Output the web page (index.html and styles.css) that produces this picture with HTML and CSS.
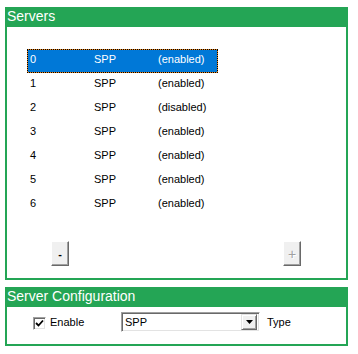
FILE: index.html
```html
<!DOCTYPE html>
<html>
<head>
<meta charset="utf-8">
<link rel="stylesheet" href="styles.css">
</head>
<body>
<section class="group">
  <div class="title">Servers</div>
  <div class="panel servers-panel">
    <ul class="list">
      <li class="row selected"><span>0</span><span>SPP</span><span>(enabled)</span></li>
      <li class="row"><span>1</span><span>SPP</span><span>(enabled)</span></li>
      <li class="row"><span>2</span><span>SPP</span><span>(disabled)</span></li>
      <li class="row"><span>3</span><span>SPP</span><span>(enabled)</span></li>
      <li class="row"><span>4</span><span>SPP</span><span>(enabled)</span></li>
      <li class="row"><span>5</span><span>SPP</span><span>(enabled)</span></li>
      <li class="row"><span>6</span><span>SPP</span><span>(enabled)</span></li>
    </ul>
    <div class="buttons">
      <button class="btn">-</button>
      <button class="btn" disabled>+</button>
    </div>
  </div>
</section>
<section class="group config">
  <div class="title">Server Configuration</div>
  <div class="panel config-panel">
    <label class="check">
      <span class="box"><svg width="9" height="9" viewBox="0 0 9 9"><polyline points="1,4 3.5,6.5 8,1.5" fill="none" stroke="#000" stroke-width="1.8"/></svg></span>
      <span>Enable</span>
    </label>
    <div class="combo">
      <span class="value">SPP</span>
      <span class="drop"><svg width="7" height="4" viewBox="0 0 7 4"><polygon points="0,0 7,0 3.5,4" fill="#000"/></svg></span>
    </div>
    <span class="type-label">Type</span>
  </div>
</section>
</body>
</html>
```
FILE: styles.css
```css
html, body {
  background: #fff;
}
body {
  margin: 0;
  padding: 7px 0 0 5px;
  font-family: "Liberation Sans", Arial, sans-serif;
  font-size: 11px;
  color: #000;
}
.group {
  width: 343px;
}
.config {
  margin-top: 7px;
}
.title {
  background: #24a555;
  color: #fff;
  font-size: 14px;
  height: 20px;
  line-height: 18px;
  padding-left: 2px;
  box-sizing: border-box;
}
.panel {
  border: 2px solid #24a555;
  border-top: 0;
}
.servers-panel {
  padding: 22px 0 12px 20px;
}
.list {
  list-style: none;
  margin: 0;
  padding: 0;
  width: 191px;
}
.row {
  box-sizing: border-box;
  height: 24px;
  border: 1px solid transparent;
  padding: 3px 0 0 2px;
  line-height: 13px;
  display: grid;
  grid-template-columns: 64px 64px auto;
}
.row.selected {
  border: 1px dotted #000;
  background: linear-gradient(#0078d7, #0078d7) padding-box, linear-gradient(#e8861e, #e8861e) border-box;
  color: #fff;
}
.buttons {
  display: flex;
  justify-content: space-between;
  margin-top: 24px;
  padding: 0 45px 0 24px;
}
.btn {
  box-sizing: border-box;
  width: 18px;
  height: 25px;
  padding: 0;
  margin: 0;
  background: #f0f0f0;
  border: 1px solid;
  border-color: #fff #696969 #696969 #fff;
  box-shadow: inset -1px -1px 0 #a0a0a0;
  font-family: "Liberation Sans", Arial, sans-serif;
  font-size: 11px;
  font-weight: bold;
  color: #000;
  line-height: 20px;
}
.btn:disabled {
  color: #a0a0a0;
  font-weight: normal;
  font-size: 14px;
  text-shadow: 1px 1px 0 #fff;
}
.config-panel {
  display: flex;
  align-items: center;
  padding: 5px 0 12px 26px;
}
.check {
  display: flex;
  align-items: center;
  width: 88px;
  height: 20px;
}
.box {
  box-sizing: border-box;
  width: 13px;
  height: 13px;
  margin-right: 4px;
  margin-top: 2px;
  background: #fff;
  border: 1px solid;
  border-color: #a0a0a0 #fff #fff #a0a0a0;
  box-shadow: inset 1px 1px 0 #696969, inset -1px -1px 0 #e3e3e3;
  display: flex;
  align-items: center;
  justify-content: center;
}
.combo {
  box-sizing: border-box;
  width: 139px;
  height: 20px;
  border: 1px solid;
  border-color: #a0a0a0 #fff #fff #a0a0a0;
  box-shadow: inset 1px 1px 0 #696969, inset -1px -1px 0 #e3e3e3;
  background: #fff;
  display: flex;
  align-items: center;
  padding: 2px 2px 2px 2px;
}
.value {
  flex: 1;
  padding-left: 1px;
}
.drop {
  box-sizing: border-box;
  width: 16px;
  height: 16px;
  background: #f0f0f0;
  border: 1px solid;
  border-color: #e3e3e3 #696969 #696969 #e3e3e3;
  box-shadow: inset 1px 1px 0 #fff, inset -1px -1px 0 #a0a0a0;
  display: flex;
  align-items: center;
  justify-content: center;
}
.type-label {
  margin-left: 7px;
}
```
